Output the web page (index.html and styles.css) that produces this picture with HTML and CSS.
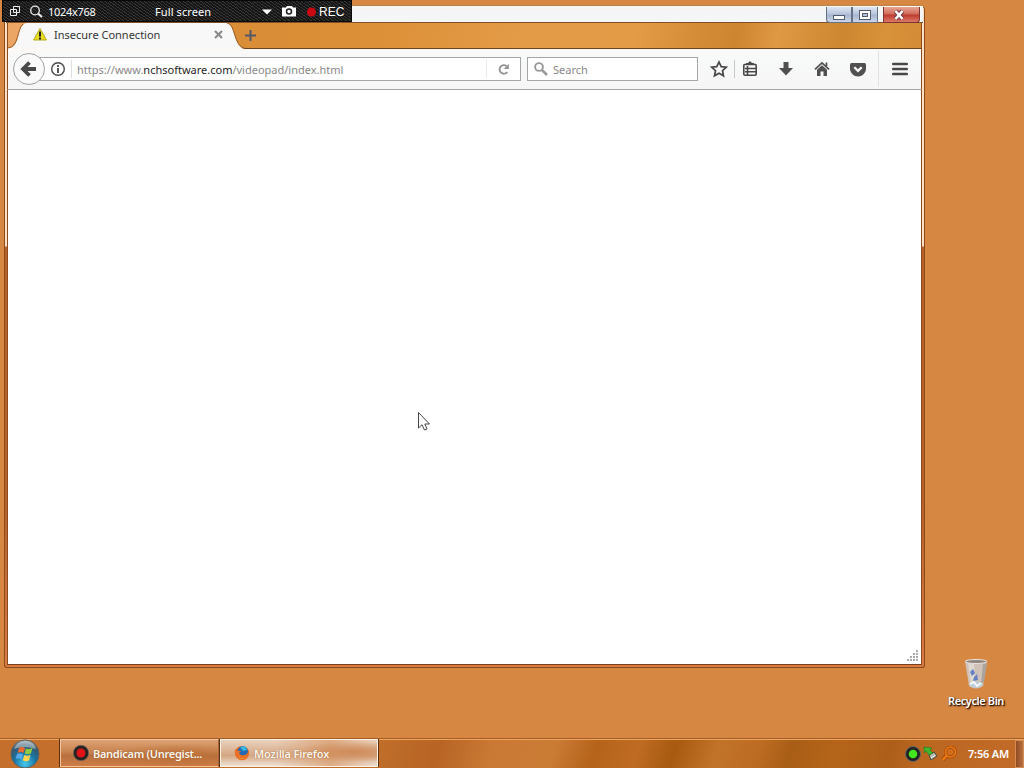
FILE: index.html
```html
<!DOCTYPE html>
<html lang="en">
<head>
<meta charset="utf-8">
<title>Desktop</title>
<link rel="stylesheet" href="styles.css">
</head>
<body>
<main class="desktop">
  <section class="window">
    <div class="caption">
      <div class="controls">
        <span class="ctl min"><svg width="24" height="14"><rect x="6.500" y="7.500" width="11" height="4" fill="#fff" stroke="#555c70"/></svg></span>
        <span class="ctl max"><svg width="24" height="14"><rect x="6.500" y="2.500" width="11" height="9" fill="#fff" stroke="#555c70"/><rect x="9.500" y="5.500" width="5" height="3" fill="#b9c5dc" stroke="#555c70"/></svg></span>
        <span class="ctl close"><svg width="35" height="14"><path d="M11.500 3L18.500 11M18.500 3L11.500 11" stroke="#713b43" stroke-width="4.500"/><path d="M11.500 3L18.500 11M18.500 3L11.500 11" stroke="#fff" stroke-width="2.600"/></svg></span>
      </div>
    </div>
    <div class="tabs">
      <svg class="tabshape" width="250" height="26"><path d="M0 0H16C11 3 13 23 0 25V0Z" fill="#eba666"/><path d="M0 26V25C12 25 9 6 15 2Q16 0 19 0H218C228 0 225 24 237 26Z" fill="#f8f8f8"/><path d="M0 25C11 24 9 6 15 1M219 0C228 1 225 23 237 25.500" fill="none" stroke="#9a5b25"/></svg>
      <div class="tab">
        <svg width="14" height="13"><path d="M7 .5L13.500 12H.5Z" fill="#e9dc22" stroke="#b8aa24"/><path d="M7 3.500V8.500M7 9.500V11.500" stroke="#222" stroke-width="2"/></svg>
        <span class="tabname">Insecure Connection</span>
        <svg class="tabclose" width="9" height="9"><path d="M1 1L8 8M8 1L1 8" stroke="#888" stroke-width="2"/></svg>
      </div>
      <svg class="plus" width="11" height="11"><path d="M5.500 0V11M0 5.500H11" stroke="#535766" stroke-width="2"/></svg>
    </div>
    <div class="toolbar">
      <div class="back"><svg width="30" height="30"><path d="M8.500 15H22M15.500 8.500L9 15L15.500 21.500" fill="none" stroke="#494949" stroke-width="3.800"/></svg></div>
      <div class="url">
        <svg width="14" height="14"><circle cx="7" cy="7" r="6.300" fill="none" stroke="#484848" stroke-width="1.400"/><path d="M7 3V5M7 6V11" stroke="#484848" stroke-width="1.800"/></svg>
        <i class="sep"></i>
        <span class="address">https://www.<b>nchsoftware.com</b>/videopad/index.html</span>
        <i class="sep end"></i>
        <svg class="reload" width="13" height="13"><path d="M9.500 3A4.300 4.300 0 1 0 10.300 9" fill="none" stroke="#949494" stroke-width="1.900"/><path d="M11.800 .7V6H6.700Z" fill="#949494"/></svg>
      </div>
      <div class="search">
        <svg width="14" height="14"><circle cx="5" cy="5" r="3.900" fill="none" stroke="#999" stroke-width="1.900"/><path d="M8 8L13 13" stroke="#999" stroke-width="2.500"/></svg>
        <span>Search</span>
      </div>
      <div class="tools">
        <svg width="18" height="18"><path d="M9 2L11.200 6.700L16.200 7.200L12.500 10.700L13.500 15.800L9 13.300L4.500 15.800L5.500 10.700L1.800 7.200L6.800 6.700Z" fill="none" stroke="#484848" stroke-width="1.700"/></svg>
        <i class="sep tall"></i>
        <svg class="list" width="16" height="16"><path d="M2.500 3.500H13.500Q14.200 3.500 14.200 4.500V13Q14.200 14.200 13 14.200H3Q1.800 14.200 1.800 13V4.500Q1.800 3.500 2.500 3.500ZM3 7.500H13.500M3 10.800H13.500M5.500 5V14" fill="none" stroke="#484848" stroke-width="1.600"/><path d="M4 4V2H6L8 0L10 2H12V4Z" fill="#484848"/></svg>
        <svg class="down" width="16" height="16"><path d="M5.500 1H10.500V7H15L8 14.500L1 7H5.500Z" fill="#505050"/></svg>
        <svg class="home" width="16" height="16"><path d="M1 8.300L8 1.800L15 8.300M12.500 1.500V5" fill="none" stroke="#505050" stroke-width="1.700"/><path d="M3 8.800L8 4.300L13 8.800V15H9.500V10.500H6.500V15H3Z" fill="#505050"/></svg>
        <svg class="pocket" width="16" height="15"><path d="M1.500 1H14.500Q16 1 16 2.500V6.500C16 11 12 14.500 8 14.500S0 11 0 6.500V2.500Q0 1 1.500 1Z" fill="#505050"/><path d="M4.300 5.300L8 8.900L11.700 5.300" fill="none" stroke="#fff" stroke-width="2.200"/></svg>
        <i class="divider"></i>
        <svg class="menu" width="16" height="14"><path d="M1.200 2H14.800M1.200 7H14.800M1.200 12H14.800" stroke="#484848" stroke-width="2.600" stroke-linecap="round"/></svg>
      </div>
    </div>
    <div class="page"><svg width="12" height="12"><path d="M9 1h2M9 4h2M6 4h2M9 7h2M6 7h2M3 7h2M9 10h2M6 10h2M3 10h2M0 10h2" stroke="#aaa" stroke-width="2"/></svg></div>
  </section>

  <div class="recorder">
    <svg width="348" height="21" class="recicons"><path d="M10.500 5.500H16.500V11.500H10.500ZM7.500 8.500H13.500V14.500H7.500Z" fill="none" stroke="#eee"/><circle cx="32" cy="9.500" r="4.300" fill="none" stroke="#eee" stroke-width="1.300"/><path d="M35 12.500L39 16" stroke="#eee" stroke-width="1.900"/><path d="M259 8.500H269L264 13.500Z" fill="#fff"/><path d="M279 6.500H283L284 5H289L290 6.500H293V15.500H279Z" fill="#fff"/><circle cx="286" cy="10.500" r="2.500" fill="#fff" stroke="#222" stroke-width="1.500"/><circle cx="308.500" cy="11" r="4.500" fill="#c90813"/></svg>
    <span class="dims">1024x768</span><span class="mode">Full screen</span><span class="rec">REC</span>
  </div>

  <div class="bin">
    <svg width="26" height="32"><path d="M2 3L6 28Q13 33 20 28L24 3Z" fill="#d0c2b8"/><path d="M5 5L8 26H12L11 5Z" fill="#dfd8d0"/><path d="M20 6L18 26L21 24L24 5Z" fill="#aaa39d"/><path d="M7 14L10 11L12 15L9 18ZM11 19L14 16L15 22L10 23Z" fill="#657fc2"/><ellipse cx="13" cy="26.500" rx="7" ry="3" fill="#bdd0dc"/><path d="M7 26L11 24L14 28L18 25" fill="none" stroke="#fff" stroke-width="1.500"/><ellipse cx="13" cy="3.500" rx="11" ry="2" fill="#8d8681" stroke="#ece4dc"/></svg>
    <span>Recycle Bin</span>
  </div>

  <svg class="pointer" width="13" height="20"><path d="M.5 .5V16L4 12.700L6.500 18L9 17L6.800 12H11.500Z" fill="#fff" stroke="#444"/></svg>

  <footer class="taskbar">
    <svg class="start" width="30" height="29" viewBox="0 0 30 29"><defs><radialGradient id="orb" cx=".5" cy=".85" r=".9"><stop offset="0" stop-color="#45caed"/><stop offset=".45" stop-color="#19729f"/><stop offset=".75" stop-color="#395668"/><stop offset="1" stop-color="#c3d0d6"/></radialGradient></defs><circle cx="15" cy="15" r="14" fill="url(#orb)" stroke="#5e605e"/><path d="M4 10Q8 1 17 2Q24 3 26 10Q14 6 4 10Z" fill="#dce6e9" opacity=".5"/><path d="M9 9Q12 7 15 9L13.500 14Q11 12 7.500 14Z" fill="#ef6a32"/><path d="M16 9.500Q19 11 22.500 9L21 14.500Q18 16 14.700 14.500Z" fill="#91c940"/><path d="M7 15Q10 13.500 13 15.300L11.500 20.500Q9 18.500 5.500 20Z" fill="#58a8ec"/><path d="M14.300 16Q17 17.500 20.500 16L19 21.500Q16 23 12.700 21.200Z" fill="#ffd34b"/></svg>
    <div class="task">
      <svg width="16" height="16"><circle cx="8" cy="8" r="7.700" fill="#272321" stroke="#77716e" stroke-width=".6"/><circle cx="8" cy="8" r="4.500" fill="#e01318"/></svg>
      <span class="t1">Bandicam (Unregist...</span>
    </div>
    <div class="task active">
      <svg width="16" height="16"><circle cx="8" cy="8" r="7" fill="#e86a25"/><circle cx="8.700" cy="6.500" r="5.300" fill="#2369b4"/><path d="M6 2L11 1L13 5L9 6Z" fill="#36b7e2"/><path d="M1 4L4 6L7 6L5 8Q7 12 13 9L15 5Q16 11 12 14Q7 17 3 13Q0 9 1 4Z" fill="#ea7025"/><path d="M13 11Q9 15 4 12Q8 16 13 11Z" fill="#f6c54b"/></svg>
      <span class="t2">Mozilla Firefox</span>
    </div>
    <div class="tray">
      <svg width="16" height="16"><circle cx="8" cy="8" r="7.500" fill="#232323" stroke="#666"/><circle cx="8" cy="8" r="4.300" fill="#43e51e"/></svg>
      <svg class="usb" width="15" height="16"><path d="M6 9L11 6L14 10L8 14Z" fill="#b5b8ae" stroke="#484a43"/><path d="M1 1L9 2L7 4L10 7L6 9L3 5L1 7Z" fill="#3fb62e" stroke="#26701f" stroke-width=".6"/><path d="M8 12L12 9.500" stroke="#fff"/></svg>
      <svg width="16" height="16"><circle cx="9.500" cy="6" r="5" fill="none" stroke="#a84a0c" stroke-width="3"/><path d="M6 9.500L1.500 14" stroke="#a84a0c" stroke-width="4"/><circle cx="9.500" cy="6" r="5" fill="none" stroke="#ee7a10" stroke-width="1.600"/><circle cx="9.500" cy="6" r="1.800" fill="none" stroke="#ee7a10"/><path d="M6 9.500L1.500 14" stroke="#ee7a10" stroke-width="2.300"/></svg>
      <span class="clock">7:56 AM</span>
      <i class="peek"></i>
    </div>
  </footer>
</main>
</body>
</html>
```
FILE: styles.css
```css
* { box-sizing: border-box; }
body { margin: 0; font: 11px/16px "Noto Sans", "Open Sans", sans-serif; overflow: hidden; }
svg { display: block; flex: none; }
span { white-space: nowrap; }
.desktop { position: relative; width: 1024px; height: 768px; background: #d68742; overflow: hidden; }

.window { position: absolute; left: 4px; top: 5px; width: 921px; height: 663px; padding: 0 2px 2px; border: 1px solid #8c4a1d; border-top: 1px solid #bc8252; border-radius: 5px 5px 3px 3px; background: linear-gradient(#fbe0c5 0 240px, #b7622b 241px 500px, #d77c43 660px); display: flex; flex-direction: column; }
.caption { height: 17px; flex: none; margin: 0 -1px; background: linear-gradient(#fff8ec, #f4f5f7 30%, #f4f6f7); border-bottom: 1px solid #815029; display: flex; justify-content: flex-end; }
.controls { display: flex; height: 16px; margin-top: 1px; padding-right: 3px; }
.ctl { height: 16px; border: 1px solid #687086; border-top: 0; padding-top: 1px; background: linear-gradient(#dfe7f4, #b6c3da 48%, #a4b4ce 52%, #ccd8ea); }
.min { width: 26px; border-radius: 0 0 0 4px; }
.max { width: 26px; }
.close { width: 37px; margin-left: 5px; border-color: #7c3333; border-radius: 0 0 4px 0; background: linear-gradient(#e8a592, #d06a5a 48%, #bd3b2e 52%, #df7967); }

.tabs { position: relative; height: 26px; flex: none; background: linear-gradient(100deg, #e39842 0, #d98d36 250px, #dc9138 370px, #e49b48 520px, #e39b46 620px, #d28b34 690px, #ce8530 720px, #df9844 760px, #cc8730 825px, #d89239 865px, #d38b35); border-bottom: 1px solid #704320; display: flex; align-items: center; }
.tabs, .toolbar, .page { border-left: 1px solid #8c4a1d; border-right: 1px solid #8c4a1d; }
.tabshape { position: absolute; left: 0; top: 0; }
.tab { position: relative; width: 190px; margin: -2px 0 0 25px; display: flex; align-items: center; }
.tabname { margin-left: 7px; color: #353535; }
.tabclose { margin-left: auto; }
.plus { margin: -1px 0 0 22px; }

.toolbar { height: 41px; flex: none; background: linear-gradient(#fffaf2 0, #f8f9f9 4px, #f6f6f6); border-bottom: 1px solid #a5a5a5; display: flex; align-items: center; }
.back { position: relative; z-index: 1; width: 32px; height: 32px; margin-left: 5px; border: 1px solid #a2a2a2; border-radius: 50%; background: #fafafa; }
.url { width: 483px; height: 24px; margin-left: -7px; padding-left: 13px; border: 1px solid #a6a6a6; border-left: 0; background: #fff; display: flex; align-items: center; }
.sep { width: 1px; height: 18px; background: #dedede; margin-left: 6px; }
.address { margin-left: 5px; padding-top: 1px; color: #888; }
.address b { font-weight: 400; color: #252525; }
.end { margin-left: auto; background: #eaeaea; }
.reload { margin: 0 10px; }
.search { width: 171px; height: 24px; margin-left: 6px; padding-left: 6px; border: 1px solid #a6a6a6; background: #fff; display: flex; align-items: center; gap: 5px; color: #888; }
.search span { padding-top: 1px; }
.tools { display: flex; align-items: center; flex: 1; height: 40px; padding-left: 12px; }
.tall { background: #c8c8c8; }
.list { margin-left: 7px; }
.down, .home, .pocket { margin-left: 20px; }
.divider { width: 1px; height: 36px; background: #e1e1e1; margin-left: 12px; }
.menu { margin-left: 13px; }
.page { flex: 1; background: #fff; border-bottom: 1px solid #7b3b1d; display: flex; align-items: flex-end; justify-content: flex-end; padding: 0 2px 2px 0; }

.recorder { position: absolute; left: 2px; top: 0; width: 350px; height: 22px; border: 1px solid #080808; background: repeating-linear-gradient(35deg, #151515 0 1.6px, #383838 1.8px 2.5px); color: #fff; display: flex; align-items: center; }
.recicons { position: absolute; left: 0; top: 0; }
.dims, .mode { padding-top: 2px; }
.dims { width: 107px; margin-left: 45px; letter-spacing: -.3px; }
.mode { width: 164px; letter-spacing: .1px; }
.rec { padding-top: 2px; font: 12px/16px "Liberation Sans", sans-serif; }

.bin { position: absolute; left: 936px; top: 658px; width: 80px; display: flex; flex-direction: column; align-items: center; color: #fff; text-shadow: 1px 1px 2px #241000, 1px 1px 1px #3b1a00; }
.bin span { margin-top: 3px; font-weight: 600; letter-spacing: -.4px; }
.pointer { position: absolute; left: 418px; top: 412px; }

.taskbar { position: absolute; left: 0; bottom: 0; width: 1024px; height: 30px; border-top: 1px solid #a15c28; box-shadow: inset 0 1px #f2a761; background: linear-gradient(108deg, #c56f2c 0, #bf6d29 370px, #b76425 420px, #ca7934 470px, #ca7b34 530px, #b5631b 570px, #bf6b24 610px, #a75a10 645px, #c17429 685px, #bd6c23 725px, #a95e16 755px, #b56519 800px, #ad5f1a 850px, #ba6720 880px, #c36b2a); display: flex; color: #fff; font-weight: 600; }
.start { margin: 0 20px 0 10px; }
.task { width: 159px; height: 28px; padding: 1px 0 1px 12px; border: 1px solid #f4c49a; border-right-color: #a5643a; background: radial-gradient(ellipse 60px 12px at 75% 60%, #bd7138, transparent), linear-gradient(#dda273, #c8834f 45%, #b97040 60%, #cd7c45); display: flex; align-items: center; gap: 4px; box-shadow: -1px 0 #5d300f, 1px 0 #5d300f; }
.task span { color: #fff8ee; text-shadow: 0 0 1px #8a4d24; padding-top: 1px; }
.t1 { letter-spacing: -.28px; }
.t2 { letter-spacing: -.17px; }
.active { width: 158px; padding-left: 13px; margin-left: 1px; border-color: #fff4e3; background: radial-gradient(ellipse 60px 10px at 85% 45%, #cf8b59, transparent), linear-gradient(90deg, transparent 35%, #d59564aa 70%, transparent), linear-gradient(#ead2be, #d4a783 60%, #eee2d7); }
.tray { margin-left: auto; display: flex; align-items: center; }
.usb { margin: 0 3px 0 2px; }
.clock { margin-left: 11px; letter-spacing: -.2px; }
.peek { width: 9px; height: 28px; margin-left: 6px; border: 1px solid #d58b54; background: linear-gradient(90deg, #8f4b20, #bb7244); }
```
